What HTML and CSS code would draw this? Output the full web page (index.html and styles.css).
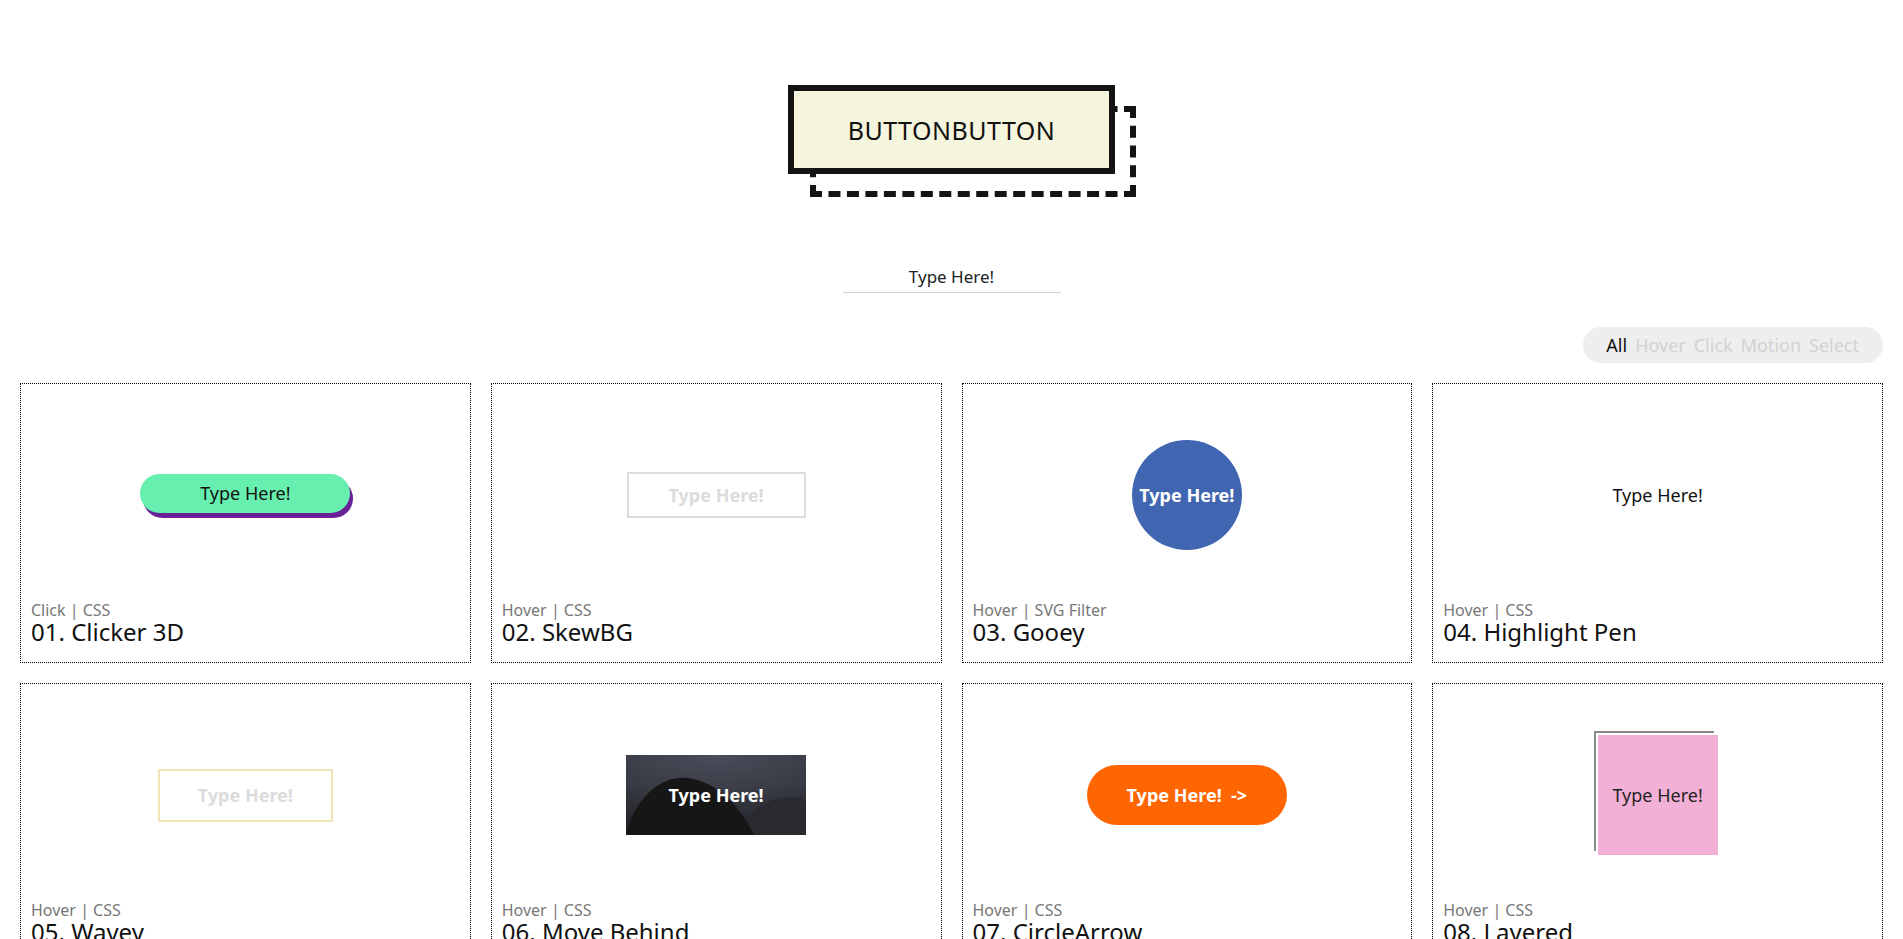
FILE: index.html
```html
<!DOCTYPE html>
<html lang="en">
<head>
<meta charset="utf-8">
<title>Buttons</title>
<link rel="stylesheet" href="styles.css">
</head>
<body>
<header class="hero">
  <button class="big-btn">BUTTONBUTTON</button>
</header>
<div class="search">
  <div class="search-field">Type Here!</div>
</div>
<nav class="filters">
  <div class="filter-pill">
    <span class="filter active">All</span>
    <span class="filter">Hover</span>
    <span class="filter">Click</span>
    <span class="filter">Motion</span>
    <span class="filter">Select</span>
  </div>
</nav>
<main class="grid">
  <article class="card">
    <div class="preview"><button class="b-clicker">Type Here!</button></div>
    <div class="meta">Click | CSS</div>
    <h2 class="title">01. Clicker 3D</h2>
  </article>
  <article class="card">
    <div class="preview"><button class="b-skew">Type Here!</button></div>
    <div class="meta">Hover | CSS</div>
    <h2 class="title">02. SkewBG</h2>
  </article>
  <article class="card">
    <div class="preview"><button class="b-gooey">Type Here!</button></div>
    <div class="meta">Hover | SVG Filter</div>
    <h2 class="title">03. Gooey</h2>
  </article>
  <article class="card">
    <div class="preview"><button class="b-pen">Type Here!</button></div>
    <div class="meta">Hover | CSS</div>
    <h2 class="title">04. Highlight Pen</h2>
  </article>
  <article class="card">
    <div class="preview"><button class="b-wavey">Type Here!</button></div>
    <div class="meta">Hover | CSS</div>
    <h2 class="title">05. Wavey</h2>
  </article>
  <article class="card">
    <div class="preview">
      <button class="b-behind">
        <svg class="hills" viewBox="0 0 180 80" preserveAspectRatio="none" aria-hidden="true">
          <path d="M112 80 C118 62 132 46 160 42 C172 41 178 43 180 46 L180 80 Z" fill="#2a2b31"/>
          <path d="M0 80 C6 52 26 26 52 23 C82 20 112 46 128 80 Z" fill="#161616"/>
        </svg>
        <span class="label">Type Here!</span>
      </button>
    </div>
    <div class="meta">Hover | CSS</div>
    <h2 class="title">06. Move Behind</h2>
  </article>
  <article class="card">
    <div class="preview"><button class="b-arrow">Type Here!&nbsp; -&gt;</button></div>
    <div class="meta">Hover | CSS</div>
    <h2 class="title">07. CircleArrow</h2>
  </article>
  <article class="card">
    <div class="preview"><button class="b-layered">Type Here!</button></div>
    <div class="meta">Hover | CSS</div>
    <h2 class="title">08. Layered</h2>
  </article>
</main>
</body>
</html>
```
FILE: styles.css
```css
*, *::before, *::after { box-sizing: border-box; }

body {
  margin: 0;
  background: #fff;
  color: #111;
  font-family: "Noto Sans", "DejaVu Sans", sans-serif;
}

button {
  font-family: inherit;
  cursor: pointer;
}

.hero {
  display: flex;
  justify-content: center;
  padding-top: 85px;
}

.big-btn {
  position: relative;
  width: 327px;
  height: 89px;
  border: 6px solid #141414;
  background: #f5f4dc;
  color: #111;
  font-size: 25px;
  letter-spacing: 0.5px;
  padding: 0;
}

.big-btn::before {
  content: "";
  position: absolute;
  top: 15px;
  left: 16px;
  width: 326px;
  height: 91px;
  border: 6px dashed #141414;
  z-index: -1;
}

.search {
  display: flex;
  justify-content: center;
  margin-top: 88px;
}

.search-field {
  width: 218px;
  height: 31px;
  line-height: 29px;
  text-align: center;
  font-size: 17px;
  color: #222;
  border-bottom: 1px solid #d0d0d0;
}

.filters {
  display: flex;
  justify-content: flex-end;
  padding: 0 20px;
  margin-top: 34px;
}

.filter-pill {
  display: flex;
  align-items: center;
  gap: 8px;
  height: 36px;
  padding: 0 24px 0 23px;
  background: #eeeeee;
  border-radius: 18px;
  font-size: 18px;
}

.filter { color: #d2d2d2; }
.filter.active { color: #111; }

.grid {
  display: grid;
  grid-template-columns: repeat(4, 1fr);
  gap: 20px;
  padding: 0 20px;
  margin-top: 20px;
}

.card {
  height: 280px;
  border: 1px dotted #000;
  padding: 0 10px;
}

.preview {
  height: 216px;
  padding-top: 6px;
  display: flex;
  align-items: center;
  justify-content: center;
}

.meta {
  font-size: 16px;
  line-height: 20px;
  color: #777;
}

.title {
  margin: 0;
  font-size: 24px;
  line-height: 24px;
  font-weight: normal;
  color: #111;
}

.preview button {
  font-size: 18px;
  padding: 0;
  border: none;
  background: none;
}

.b-clicker {
  width: 210px;
  height: 39px;
  border-radius: 20px;
  background: #66efae !important;
  box-shadow: 3px 5px 0 #6a2196;
  color: #111;
  margin-top: -4px;
}

.b-skew {
  width: 179px;
  height: 46px;
  border: 2px solid #dcdcdc !important;
  color: #dcdcdc;
  font-weight: bold;
}

.b-gooey {
  width: 110px;
  height: 110px;
  border-radius: 50%;
  background: #4166b1 !important;
  color: #fff;
  font-weight: bold;
}

.b-pen {
  color: #111;
}

.b-wavey {
  width: 175px;
  height: 53px;
  border: 2px solid #f1e3b6 !important;
  color: #dcdcdc;
  font-weight: bold;
}

.b-behind {
  position: relative;
  width: 180px;
  height: 80px;
  overflow: hidden;
  background: radial-gradient(ellipse 120% 90% at 50% 0%, #4a4d5a 0%, #383a44 55%, #25262c 100%) !important;
  color: #fff;
  font-weight: bold;
}

.b-behind .hills {
  position: absolute;
  inset: 0;
  width: 100%;
  height: 100%;
}

.b-behind .label {
  position: relative;
}

.b-arrow {
  width: 200px;
  height: 60px;
  border-radius: 30px;
  background: #ff6501 !important;
  color: #fff;
  font-weight: bold;
}

.b-layered {
  position: relative;
  width: 120px;
  height: 120px;
  background: #f3b0d6 !important;
  color: #222;
}

.b-layered::before {
  content: "";
  position: absolute;
  top: -4px;
  left: -4px;
  width: 120px;
  height: 120px;
  border-top: 2px solid #8a8a8a;
  border-left: 2px solid #8a8a8a;
  z-index: -1;
}
```
